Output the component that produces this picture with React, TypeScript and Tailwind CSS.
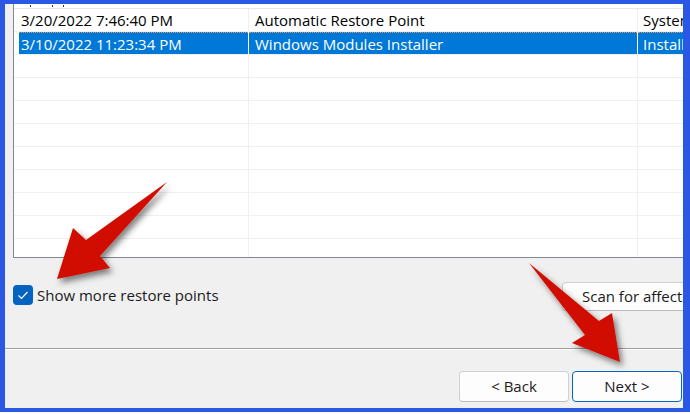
const font = { fontFamily: '"Open Sans", "Noto Sans", sans-serif' };

const rows = [
  { date: '3/20/2022 7:46:40 PM', desc: 'Automatic Restore Point', type: 'System', selected: false },
  { date: '3/10/2022 11:23:34 PM', desc: 'Windows Modules Installer', type: 'Install', selected: true },
];

function Row({ date, desc, type, selected }: { date?: string; desc?: string; type?: string; selected?: boolean }) {
  const line = selected ? 'border-white' : 'border-[#f0f0f0]';
  const cell = selected ? 'bg-[#0078d7] text-white border-t border-dotted border-t-[#e0955a]' : 'text-black';
  return (
    <div className="flex h-[23px] border-b border-[#f0f0f0] text-[15px] leading-[22px] shrink-0">
      <div className={`w-[235px] shrink-0 pl-[5px] border-r ${line}`}>
        <div className={`h-[22px] pl-[2px] whitespace-nowrap ${cell}`}>{date}</div>
      </div>
      <div className={`w-[389px] shrink-0 border-r ${line}`}>
        <div className={`h-[22px] pl-[6px] whitespace-nowrap ${cell}`}>{desc}</div>
      </div>
      <div className="w-[120px] shrink-0">
        <div className={`h-[22px] pl-[5px] whitespace-nowrap ${cell}`}>{type}</div>
      </div>
    </div>
  );
}

function Arrows() {
  return (
    <svg className="absolute inset-0 pointer-events-none" width="690" height="414" viewBox="0 0 690 414">
      <defs>
        <filter id="sh" x="-30%" y="-30%" width="160%" height="160%">
          <feDropShadow dx="3" dy="4" stdDeviation="3" floodColor="#000" floodOpacity="0.5" />
        </filter>
      </defs>
      <polygon filter="url(#sh)" fill="#d01100" points="167,182 86,240 73,228 57,279 110,268 100,256" />
      <polygon filter="url(#sh)" fill="#d01100" points="529,263 599,321 612,313 620,362 572,343 585,335" />
    </svg>
  );
}

export default function App() {
  return (
    <div className="relative w-[690px] h-[414px] bg-white" style={font}>
      <div className="w-[690px] h-[412px] border-l-[5px] border-t-[4px] border-r-[7px] border-b-[4px] border-[#2a58e4] bg-[#f0f0f0] overflow-hidden">
        <div className="ml-[8px] w-[740px] h-[254px] bg-white border-l border-b border-[#828790] flex flex-col overflow-hidden">
          <div className="h-[5px] shrink-0 border-b border-[#e8e8e8] flex">
            <span className="ml-[16px] mt-[1px] w-px h-[2px] bg-[#333]" />
            <span className="ml-[21px] mt-[1px] w-px h-[2px] bg-[#333]" />
            <span className="ml-[10px] mt-[1px] w-px h-[2px] bg-[#333]" />
          </div>
          {rows.map((r) => (
            <Row key={r.date} {...r} />
          ))}
          {Array.from({ length: 9 }).map((_, i) => (
            <Row key={i} />
          ))}
        </div>

        <div className="flex items-start mt-[24px] ml-[8px]">
          <div className="w-[549px] shrink-0 flex items-center mt-[3px]">
            <div className="w-[20px] h-[20px] rounded-[4px] bg-[#0563c1] flex items-center justify-center">
              <svg width="20" height="20" viewBox="0 0 20 20">
                <polyline points="5.5,10.5 8.5,13.5 14.5,7" fill="none" stroke="white" strokeWidth="1.2" />
              </svg>
            </div>
            <span className="ml-[4px] text-[15px] leading-[20px] text-[#1b1b1b]">Show more restore points</span>
          </div>
          <button className="w-[200px] h-[29px] shrink-0 rounded-[4px] bg-[#fdfdfd] border border-[#d0d0d0] border-b-[#bdbdbd] text-left pl-[19px] text-[15px] text-[#1b1b1b] whitespace-nowrap">
            Scan for affected programs
          </button>
        </div>

        <div className="mt-[37px] border-t border-[#a0a0a0] border-b border-b-white" />

        <div className="flex justify-end gap-[3px] pr-[1px] mt-[21px]">
          <button className="w-[110px] h-[31px] rounded-[4px] bg-[#fdfdfd] border border-[#d0d0d0] border-b-[#bdbdbd] text-[15px] text-[#1b1b1b]">
            &lt; Back
          </button>
          <button className="w-[110px] h-[31px] rounded-[4px] bg-[#fdfdfd] border border-[#0067c0] text-[15px] text-[#1b1b1b]">
            Next &gt;
          </button>
        </div>
      </div>
      <Arrows />
    </div>
  );
}
